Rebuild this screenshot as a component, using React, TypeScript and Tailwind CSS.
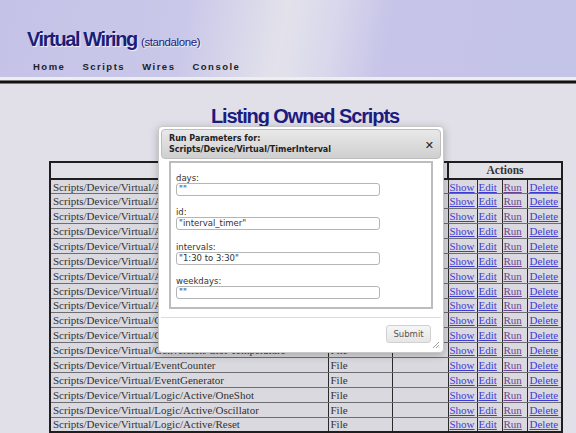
import React from 'react'

const names = [
  'Scripts/Device/Virtual/Arithmetic/Add',
  'Scripts/Device/Virtual/Arithmetic/Divide',
  'Scripts/Device/Virtual/Arithmetic/Multiply',
  'Scripts/Device/Virtual/Arithmetic/Subtract',
  'Scripts/Device/Virtual/Average',
  'Scripts/Device/Virtual/AND',
  'Scripts/Device/Virtual/Accumulator',
  'Scripts/Device/Virtual/Alarm',
  'Scripts/Device/Virtual/Analog/Threshold',
  'Scripts/Device/Virtual/Comparison/Equal',
  'Scripts/Device/Virtual/Comparison/Greater',
  'Scripts/Device/Virtual/Conversion/CtoFTemperature',
  'Scripts/Device/Virtual/EventCounter',
  'Scripts/Device/Virtual/EventGenerator',
  'Scripts/Device/Virtual/Logic/Active/OneShot',
  'Scripts/Device/Virtual/Logic/Active/Oscillator',
  'Scripts/Device/Virtual/Logic/Active/Reset',
]

const fields = [
  { label: 'days:', value: '""' },
  { label: 'id:', value: '"interval_timer"' },
  { label: 'intervals:', value: '"1:30 to 3:30"' },
  { label: 'weekdays:', value: '""' },
]

function Row({ name }: { name: string }) {
  const cell = 'border-x border-x-[#2a2a2a] border-y border-y-[#6d6d72] py-0'
  return (
    <tr className="h-[14.875px] bg-[#dad9df] text-[11px] leading-[12px] text-[#333]">
      <td className={cell + ' overflow-hidden whitespace-nowrap pl-[2px]'}>{name}</td>
      <td className={cell + ' pl-[2px]'}>File</td>
      <td className={cell}></td>
      <td className={cell + ' pl-[1px]'}>
        <a href="#" className="text-[#3d3dd6] underline">Show</a>
      </td>
      <td className={cell + ' pl-[1px]'}>
        <a href="#" className="text-[#3d3dd6] underline">Edit</a>
      </td>
      <td className={cell + ' pl-[1px]'}>
        <a href="#" className="text-[#6c4496] underline">Run</a>
      </td>
      <td className={cell + ' pl-[2px]'}>
        <a href="#" className="text-[#3d3dd6] underline">Delete</a>
      </td>
    </tr>
  )
}

export default function App() {
  return (
    <div className="relative min-h-[433px] overflow-hidden bg-[#e1e0e8] font-['Liberation_Serif',serif]">
      <header className="h-[77px] bg-[linear-gradient(100deg,#c4c2e7_0%,#cac8e9_32%,#e3e2eb_49%,#d9d8ec_57%,#c6c4e8_67%,#c4c3e8_100%)] pl-[27px] pt-[27px] font-['Liberation_Sans',Arial,sans-serif]">
        <h1 className="text-[20px] leading-[24px] font-bold tracking-[-1.4px] text-[#1d1d78] [text-shadow:1px_1px_1px_rgba(255,255,255,0.8)]">
          Virtual Wiring{' '}
          <span className="text-[11.5px] font-normal tracking-[-0.4px]">(standalone)</span>
        </h1>
        <nav className="mt-[7px] ml-[6px] flex gap-[17px] text-[9.5px] leading-[12px] font-bold tracking-[1.5px] text-[#222]">
          <a href="#">Home</a>
          <a href="#">Scripts</a>
          <a href="#">Wires</a>
          <a href="#">Console</a>
        </nav>
      </header>
      <div className="h-[3px] bg-[#eeeef2]" />
      <div className="h-[4px] border-y border-[#777] bg-[#111]" />

      <main className="ml-[49px] w-[512px]">
        <h2 className="mt-[20px] text-center font-['Liberation_Sans',Arial,sans-serif] text-[20px] leading-[24px] font-bold tracking-[-1.1px] text-[#1c1c80]">
          Listing Owned Scripts
        </h2>
        <table className="mt-[33px] w-[512px] table-fixed border-collapse border-2 border-[#1e1e1e]">
          <colgroup>
            <col className="w-[278px]" />
            <col className="w-[64px]" />
            <col className="w-[56px]" />
            <col className="w-[29px]" />
            <col className="w-[25px]" />
            <col className="w-[25px]" />
            <col className="w-[35px]" />
          </colgroup>
          <thead>
            <tr className="h-[17px] bg-[#e2e1e8] text-[11.5px] leading-[13px] text-[#333]">
              <th className="border-2 border-[#1e1e1e]"></th>
              <th className="border-2 border-[#1e1e1e]"></th>
              <th className="border-2 border-[#1e1e1e]"></th>
              <th colSpan={4} className="border-2 border-[#1e1e1e] font-bold">
                Actions
              </th>
            </tr>
          </thead>
          <tbody>
            {names.map((n) => (
              <Row key={n} name={n} />
            ))}
          </tbody>
        </table>
      </main>

      {/* run parameters dialog */}
      <div className="absolute left-[158px] top-[126px] flex h-[227px] w-[286px] flex-col rounded-[4px] border border-[#c8c8c8] bg-white p-[2px] font-['DejaVu_Sans',Verdana,sans-serif] shadow-[0_2px_8px_rgba(0,0,0,0.25)]">
        <div className="flex h-[30px] items-center justify-between rounded-[4px] border border-[#bdbdbd] bg-[linear-gradient(#e9e9e9,#cfcfcf)] pl-[7px] pr-[6px]">
          <div className="text-[8px] leading-[11px] font-bold text-[#222]">
            Run Parameters for:
            <br />
            Scripts/Device/Virtual/TimerInterval
          </div>
          <span className="mt-[2px] text-[11px] leading-none font-bold text-[#222]">✕</span>
        </div>
        <div className="mx-[8px] mt-[2px] h-[148px] border-2 border-[#bdbdbd] px-[5px] pt-[10px]">
          {fields.map((f) => (
            <div key={f.label} className="mb-[11.3px]">
              <div className="text-[8.5px] leading-[10px] text-[#333]">{f.label}</div>
              <div className="h-[13px] w-[204px] rounded-[3px] border border-[#b5b5b5] px-[2px] text-[8.5px] leading-[11px] text-[#333]">
                {f.value}
              </div>
            </div>
          ))}
        </div>
        <div className="mt-[8px] border-t border-[#dcdcdc]" />
        <div className="flex justify-end pr-[10px] pt-[7px]">
          <button className="h-[18px] w-[45px] rounded-[3px] border border-[#d0d0d0] bg-[linear-gradient(#f6f6f6,#e6e6e6)] text-[8.5px] text-[#555]">
            Submit
          </button>
        </div>
        <svg className="absolute bottom-[3px] right-[3px]" width="8" height="8" viewBox="0 0 8 8">
          <path d="M7 1 L1 7 M7 4 L4 7 M7 6.5 L6.5 7" stroke="#888" strokeWidth="0.8" />
        </svg>
      </div>
    </div>
  )
}
